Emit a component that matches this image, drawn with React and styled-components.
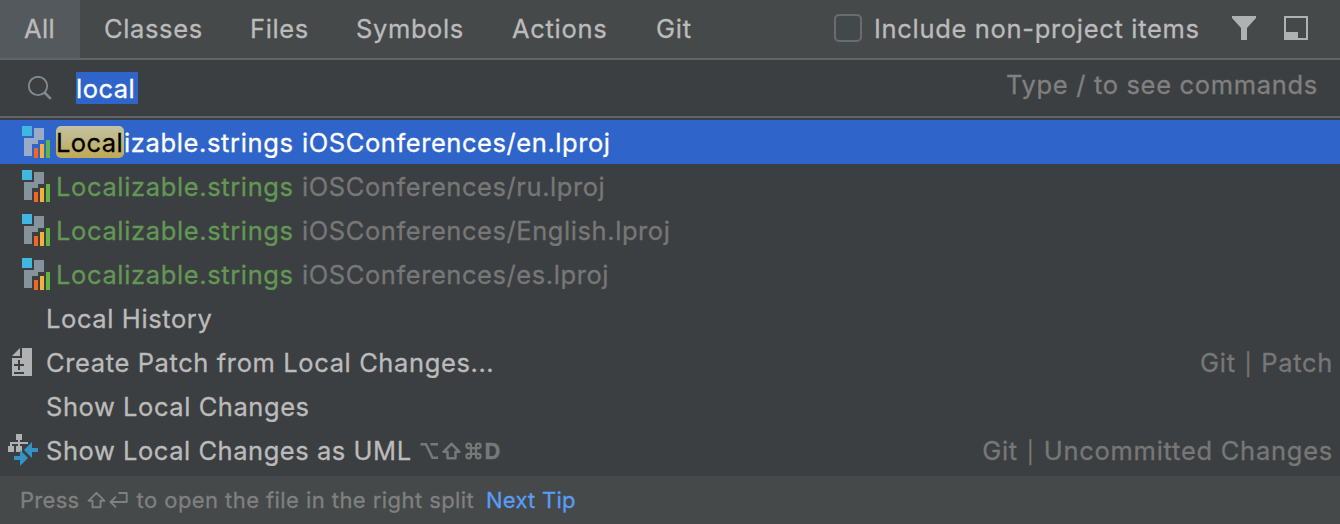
import React from "react";
import styled, { createGlobalStyle } from "styled-components";

const GlobalStyle = createGlobalStyle`
  * { box-sizing: border-box; }
  body { margin: 0; background: #3c3f41; }
`;

const Popup = styled.main`
  display: flex;
  flex-direction: column;
  width: 1340px;
  height: 524px;
  overflow: hidden;
  background: #3c3f41;
  color: #bbbbbb;
  font-family: Inter, "Liberation Sans", sans-serif;
  font-size: 25.5px;
  -webkit-text-stroke: 0.3px currentColor;
  line-height: 44px;
  white-space: pre;
`;

const Label = styled.span`
  letter-spacing: ${(p) => p.$ls ?? 0.61}px;
`;

const Header = styled.header`
  display: flex;
  height: 60px;
  background: #45494a;
  border-bottom: 2px solid #646464;
`;

const Tab = styled.div`
  width: ${(p) => p.$width}px;
  padding-left: 24px;
  line-height: 58px;
  background: ${(p) => (p.$active ? "#54595d" : "transparent")};
`;

const HeaderTools = styled.div`
  display: flex;
  align-items: center;
  margin-left: auto;
  padding-right: 32px;
  line-height: 58px;
`;

const Checkbox = styled.span`
  width: 28px;
  height: 28px;
  margin: 0 12px 2px 0;
  border: 2px solid #6b6b6b;
  border-radius: 5px;
  background: #43494a;
`;

const CheckLabel = styled(Label)`
  width: 358px;
`;

const ToolIcon = styled.svg`
  width: 24px;
  height: 24px;
  margin-bottom: 2px;
  & + & { margin-left: 28px; }
`;

const SearchRow = styled.div`
  display: flex;
  align-items: center;
  height: 58px;
  padding: 0 22px 0 28px;
  border-bottom: 2px solid #646464;
`;

const SearchIcon = styled.svg`
  width: 24px;
  height: 24px;
  margin-right: 24px;
`;

const Selection = styled.span`
  width: 62px;
  height: 32px;
  line-height: 33px;
  background: #2f65ca;
  color: #fff;
`;

const Hint = styled.span`
  margin: 0 0 6px auto;
  color: #808080;
`;

const Results = styled.div`
  padding: 2px 0 4px;
`;

const Row = styled.div`
  display: flex;
  align-items: center;
  height: 44px;
  padding: 0 8px 0 ${(p) => p.$indent}px;
  line-height: 42px;
  color: ${(p) => (p.$selected ? "#fff" : "#bbbbbb")};
  background: ${(p) => (p.$selected ? "#2f65ca" : "transparent")};
`;

const RowLabel = styled(Label)`
  padding-top: 2px;
`;

const FileName = styled(RowLabel)`
  width: 246px;
  color: ${(p) => (p.$selected ? "#fff" : "#629755")};
`;

const Match = styled.mark`
  display: inline-block;
  width: 68px;
  height: 32px;
  line-height: 34px;
  letter-spacing: 0.4px;
  border-radius: 5px;
  color: #000;
  background: linear-gradient(#c3c2a5, #bfa955);
`;

const Path = styled(RowLabel)`
  color: ${(p) => (p.$selected ? "#fff" : "#777777")};
`;

const FileGlyph = styled.svg`
  width: 28px;
  height: 32px;
  margin: 0 6px 0 0;
`;

const ActionGlyph = styled.span`
  display: flex;
  width: 38px;
`;

const Location = styled(RowLabel)`
  margin: 0 -1px 0 auto;
  color: #777777;
`;

const Bar = styled.span`
  font-size: 21.5px;
  padding: 0 1px;
`;

const Shortcut = styled.span`
  display: flex;
  align-items: center;
  height: 22px;
  margin: 2px 0 0 8px;
  color: #787878;
`;

const KeyGlyph = styled.svg`
  width: ${(p) => p.$width}px;
  height: 18px;
  overflow: visible;
  fill: none;
  stroke: currentColor;
  stroke-width: ${(p) => p.$weight ?? 2.5};
`;

const KeyLetter = styled.span`
  font-size: 22px;
  font-weight: 650;
  line-height: 22px;
`;

const Footer = styled.footer`
  display: flex;
  align-items: center;
  height: 48px;
  padding-left: 20px;
  background: #45494a;
  color: #808080;
  font-size: 22px;
`;

const FooterText = styled(Label)`
  width: ${(p) => p.$width}px;
`;

const TipLink = styled(Label)`
  color: #589df6;
`;

const tabs = [
  ["All", 80, 0.4],
  ["Classes", 146, 0.62],
  ["Files", 106, 0.6],
  ["Symbols", 156, 0.62],
  ["Actions", 144, 0.7],
  ["Git", 84, 0.8],
];

function StringsIcon({ selected }) {
  return (
    <FileGlyph viewBox="0 0 28 32" shapeRendering="crispEdges">
      <path d="M0 0h10v10H0z" fill="#40b6e0" />
      <path d="M12 2h10v12h-6v4h-6v12H2V12h10z" fill={selected ? "#9aabc8" : "#87939a"} />
      <path d="M12 22h4v10h-4z" fill="#f26522" />
      <path d="M18 18h4v14h-4z" fill="#f4af3d" />
      <path d="M24 14h4v18h-4z" fill="#62b543" />
    </FileGlyph>
  );
}

function PatchIcon() {
  return (
    <svg width="24" height="28" viewBox="-4 0 24 28">
      <path d="M0 8 8 0v8zM10 0h10v28H0V10h10z" fill="#afb1b3" />
      <path d="M2 16h4v-4h2v4h4v2H8v4H6v-4H2zM2 24h10v2H2z" fill="#3c3f41" />
    </svg>
  );
}

function UmlIcon() {
  return (
    <svg width="30" height="32" viewBox="0 0 30 32">
      <path d="M8 0h6v6h-2v2h8v2h-8v2h2v6H8v-6h2v-2H4v2h2v6H0v-6h2V8h8V6H8z" fill="#afb1b3" />
      <path d="m16 16 8-8v6h6v4h-6v6zM6 22h6v-6l8 8-8 8v-6H6z" fill="#3592c4" />
    </svg>
  );
}

function OptionKey() {
  return (
    <KeyGlyph $width={21} viewBox="0 0 21 18">
      <path d="M0.5 2.3H6l6.5 13.4H18M10.5 2.3H18" />
    </KeyGlyph>
  );
}

function ShiftKey({ width, weight }) {
  return (
    <KeyGlyph $width={width} $weight={weight} viewBox={`0 0 ${width} 18`} strokeLinejoin="round">
      <path d="m10.5 1.8 8 8h-4v6.4h-8V9.8h-4z" />
    </KeyGlyph>
  );
}

function CommandKey() {
  return (
    <KeyGlyph $width={21} viewBox="0 0 21 18">
      <path d="M7 6.2H4.6A2.3 2.3 0 1 1 7 3.9v10.2a2.3 2.3 0 1 1-2.4-2.3h9.8a2.3 2.3 0 1 1-2.4 2.3V3.9a2.3 2.3 0 1 1 2.4 2.3z" strokeWidth="2.2" />
    </KeyGlyph>
  );
}

function ReturnKey() {
  return (
    <KeyGlyph $width={22} $weight={1.9} viewBox="0 0 22 18">
      <path d="M10.5 2h8.2v9h-16M8 5.6 2.5 11 8 16.4" strokeLinejoin="round" />
    </KeyGlyph>
  );
}

const files = [
  ["iOSConferences/en.lproj", true],
  ["iOSConferences/ru.lproj"],
  ["iOSConferences/English.lproj"],
  ["iOSConferences/es.lproj"],
];

export default function App() {
  return (
    <Popup>
      <GlobalStyle />
      <Header>
        {tabs.map(([name, width, ls], i) => (
          <Tab key={name} $width={width} $active={i === 0}>
            <Label $ls={ls}>{name}</Label>
          </Tab>
        ))}
        <HeaderTools>
          <Checkbox />
          <CheckLabel $ls={0.68}>Include non-project items</CheckLabel>
          <ToolIcon viewBox="0 0 24 24">
            <path d="M0 0h24v2l-9 10v12H9V12L0 2z" fill="#afb1b3" />
          </ToolIcon>
          <ToolIcon viewBox="0 0 24 24">
            <path d="M0 0h24v24H0zM2 2v14h12v6h8V2z" fillRule="evenodd" fill="#afb1b3" />
          </ToolIcon>
        </HeaderTools>
      </Header>
      <SearchRow>
        <SearchIcon viewBox="0 0 24 24" fill="none" stroke="#7f8b91">
          <circle cx="10" cy="10" r="9.2" strokeWidth="1.8" />
          <path d="m16.5 16.5 6.3 6.3" strokeWidth="2.6" />
        </SearchIcon>
        <Selection><Label $ls={0.5}>local</Label></Selection>
        <Hint><Label $ls={0.68}>Type / to see commands</Label></Hint>
      </SearchRow>
      <Results>
        {files.map(([path, selected]) => (
          <Row key={path} $indent={22} $selected={selected}>
            <StringsIcon selected={selected} />
            <FileName $selected={selected} $ls={0.63}>
              {selected ? <><Match>Local</Match>izable.strings</> : "Localizable.strings"}
            </FileName>
            <Path $selected={selected} $ls={0.57}>{path}</Path>
          </Row>
        ))}
        <Row $indent={46}><RowLabel>Local History</RowLabel></Row>
        <Row $indent={8}>
          <ActionGlyph><PatchIcon /></ActionGlyph>
          <RowLabel>Create Patch from Local Changes...</RowLabel>
          <Location $ls={0.68}>Git <Bar>|</Bar> Patch</Location>
        </Row>
        <Row $indent={46}><RowLabel $ls={0.56}>Show Local Changes</RowLabel></Row>
        <Row $indent={8}>
          <ActionGlyph><UmlIcon /></ActionGlyph>
          <RowLabel $ls={0.54}>Show Local Changes as UML</RowLabel>
          <Shortcut>
            <OptionKey />
            <ShiftKey width={23} />
            <CommandKey />
            <KeyLetter>D</KeyLetter>
          </Shortcut>
          <Location $ls={0.74}>Git <Bar>|</Bar> Uncommitted Changes</Location>
        </Row>
      </Results>
      <Footer>
        <FooterText $width={66} $ls={0.3}>Press </FooterText>
        <ShiftKey width={22} weight={1.9} />
        <ReturnKey />
        <FooterText $width={356} $ls={0.43}> to open the file in the right split</FooterText>
        <TipLink $ls={0.25}>Next Tip</TipLink>
      </Footer>
    </Popup>
  );
}
